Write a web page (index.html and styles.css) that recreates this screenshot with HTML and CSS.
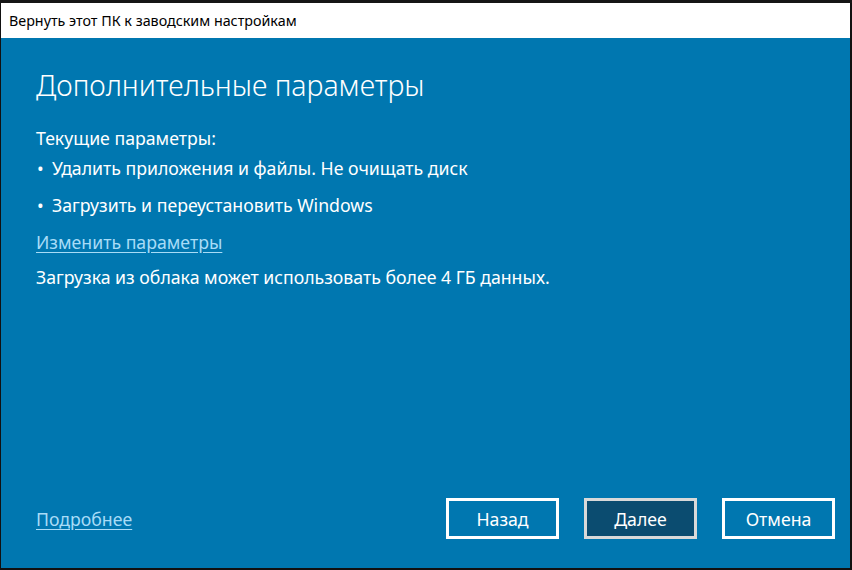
FILE: index.html
```html
<!DOCTYPE html>
<html lang="ru">

<head>
  <meta charset="UTF-8">
  <meta name="viewport" content="width=device-width, initial-scale=1.0">
  <title>Вернуть этот ПК к заводским настройкам</title>

  <link rel="stylesheet" href="styles.css">
</head>

<body>
  <div class="backdrop"></div>
  <div class="window">
    <div class="titlebar">Вернуть этот ПК к заводским настройкам</div>
    <div class="content">
      <h1 class="heading">Дополнительные параметры</h1>
      <p class="row label">Текущие параметры:</p>
      <ul class="options">
        <li>Удалить приложения и файлы. Не очищать диск</li>
        <li>Загрузить и переустановить Windows</li>
      </ul>
      <p class="row change"><a href="#" class="link">Изменить параметры</a></p>
      <p class="row">Загрузка из облака может использовать более 4 ГБ данных.</p>

      <div class="footer">
        <a href="#" class="link">Подробнее</a>
        <div class="btn_wrap">
          <button id="back">Назад</button>
          <button id="next" class="primary">Далее</button>
          <button id="cancel">Отмена</button>
        </div>
      </div>
    </div>
  </div>
</body>

</html>
```

FILE: styles.css
```css
* {
  margin: 0;
  padding: 0;
  box-sizing: border-box;
}

body {
  width: 852px;
  height: 570px;
  background: #111;
  font-family: "Noto Sans", "Open Sans", sans-serif;
  overflow: hidden;
}

/* strip of the window behind */
.backdrop {
  height: 3px;
  background: #161616;
}

.window {
  display: flex;
  flex-direction: column;
  width: 849px;
  height: 565px;
  margin-left: 1px;
}

.titlebar {
  height: 35px;
  display: flex;
  align-items: center;
  padding-left: 8px;
  background: #fff;
  color: #000;
  font-size: 14.3px;
}

.content {
  flex: 1;
  display: flex;
  flex-direction: column;
  padding: 27px 15px 0 35px;
  background: #0077b0;
  color: #fff;
}

.heading {
  font-size: 28.5px;
  font-weight: 300;
  line-height: 40px;
  margin-bottom: 21px;
}

.row {
  font-size: 17.7px;
  line-height: 24px;
  margin-bottom: 12px;
}

.row.label {
  margin-bottom: 6px;
}

.row.change {
  margin-bottom: 11px;
}

.options {
  list-style: none;
}

.options li {
  position: relative;
  font-size: 17.7px;
  line-height: 24px;
  margin-bottom: 13px;
  padding-left: 16px;
}

.options li::before {
  content: "•";
  position: absolute;
  left: 1px;
}

.link {
  color: #a8dcf7;
  text-decoration: underline;
  text-underline-offset: 3px;
}

.footer {
  margin-top: auto;
  margin-bottom: 29px;
  display: flex;
  align-items: center;
  justify-content: space-between;
  font-size: 17.7px;
}

.btn_wrap {
  display: flex;
  gap: 25px;
}

button {
  width: 113px;
  height: 41px;
  border: 3px solid #fff;
  background: transparent;
  color: #fff;
  font-family: inherit;
  font-size: 17.7px;
}

button.primary {
  background: #0b4c70;
  border-color: #d9d9d9;
}
```
